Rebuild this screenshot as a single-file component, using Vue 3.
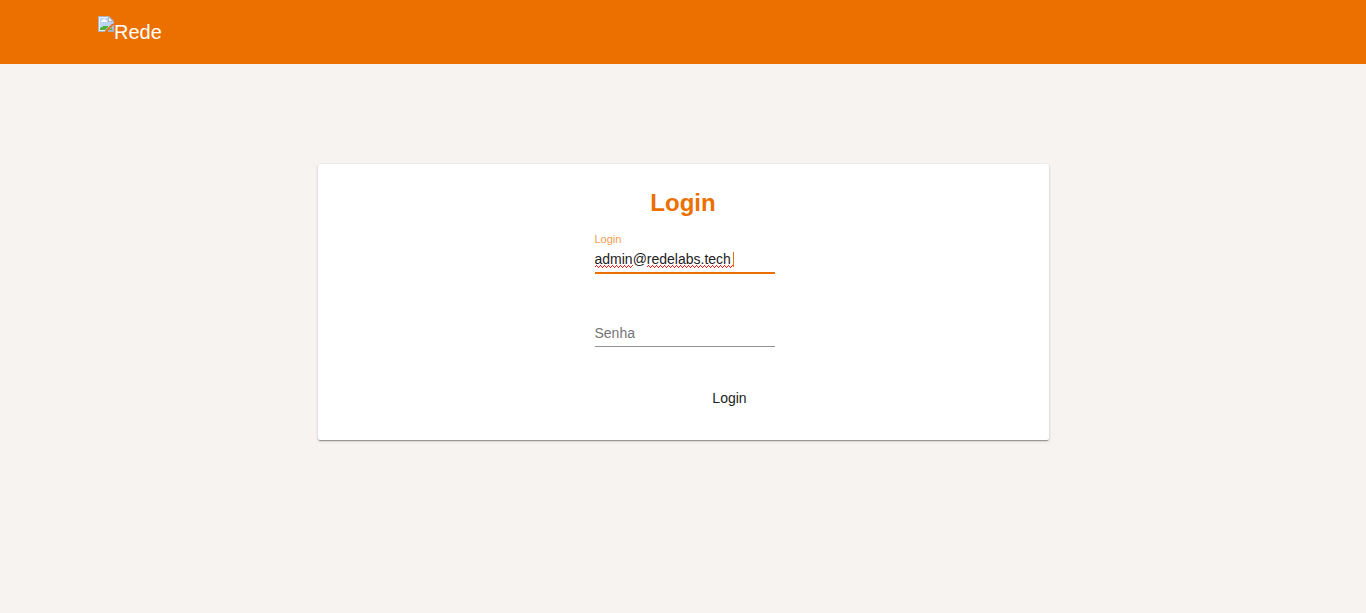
<script setup>
import { ref } from 'vue'

const login = ref('admin@redelabs.tech')
const password = ref('')
</script>

<template>
  <div class="page">
    <header class="toolbar">
      <a class="brand" href="#" aria-label="Rede">
        <svg class="broken" width="16" height="16" viewBox="0 0 16 16" aria-hidden="true">
          <path d="M0 0H11L16 5V8H14L7 15V16H0Z" fill="#a9b4c0" />
          <path d="M1 1H10.500L15 5.500V7H14L7 14V15H1Z" fill="#e8f0fb" />
          <path d="M2 2H10V6H14V7L7 14H2Z" fill="#bcd4f6" />
          <path d="M3 6V5H4V4H5V3H7V4H8V5H9V6Z" fill="#fff" />
          <path d="M2 14V12H3V11H5V10H10V11L7 14Z" fill="#4fb036" />
          <path d="M10 0L16 6H10Z" fill="#a9b4c0" />
          <path d="M11 2L14 5H11Z" fill="#fff" />
          <path d="M16 9V16H10V15L15 9Z" fill="#a9b4c0" />
          <path d="M14 11H15V12H14Z" fill="#bcd4f6" />
          <path d="M14 12V14H11.500Z" fill="#4fb036" />
        </svg>
        <span>Rede</span>
      </a>
    </header>
    <main>
      <form class="card" @submit.prevent>
        <h1>Login</h1>
        <div class="fields">
          <div class="field active">
            <label for="login">Login</label>
            <div class="control">
              <input id="login" v-model="login" type="text" autocomplete="off" spellcheck="false" />
              <svg class="spelling" width="140" height="3" aria-hidden="true">
                <defs>
                  <pattern id="wave" width="4" height="3" patternUnits="userSpaceOnUse">
                    <path d="M0 1H1V2H0ZM1 0H2V1H1ZM2 1H3V2H2ZM3 2H4V3H3Z" fill="#ff1a1a" />
                  </pattern>
                </defs>
                <rect width="38" height="3" fill="url(#wave)" />
                <rect x="52" width="86" height="3" fill="url(#wave)" />
              </svg>
              <span class="caret"></span>
            </div>
          </div>
          <div class="field">
            <div class="control">
              <label v-show="!password" class="floating" for="password">Senha</label>
              <input id="password" v-model="password" type="password" />
            </div>
          </div>
          <button type="submit">Login</button>
        </div>
      </form>
    </main>
  </div>
</template>

<style>
body {
  background: #f7f3f0;
}
</style>

<style scoped>
.page {
  min-height: 100vh;
  background: #f7f3f0;
  color: #212121;
  font-family: "Liberation Sans", Arial, sans-serif;
  font-size: 14px;
}
.toolbar {
  height: 64px;
  box-sizing: border-box;
  padding: 16px 98px;
  background: #ec7000;
}
.brand {
  display: inline-flex;
  align-items: flex-start;
  color: #fff;
  font-size: 20px;
  line-height: 32px;
  text-decoration: none;
}
.broken {
  display: block;
}
main {
  padding: 100px 16px;
}
.card {
  box-sizing: border-box;
  max-width: 731px;
  margin: 0 auto;
  padding: 24px 16px;
  border-radius: 2px;
  background: #fff;
  box-shadow: 0 1px 3px rgba(0, 0, 0, 0.2), 0 1px 1px rgba(0, 0, 0, 0.14), 0 2px 1px -1px rgba(0, 0, 0, 0.2);
}
h1 {
  margin: 0 0 15px;
  color: #ec7000;
  font-size: 24px;
  line-height: 30px;
  text-align: center;
}
.fields {
  width: 180px;
  margin: 0 auto;
  padding-left: 3px;
}
.field {
  display: flex;
  flex-direction: column;
  margin-bottom: 44px;
}
.field + .field {
  margin-bottom: 33px;
}
.field.active label {
  margin-bottom: 1px;
  color: #f29b4c;
  font-size: 11px;
  line-height: 12px;
}
.control {
  position: relative;
}
.floating {
  position: absolute;
  left: 0;
  top: 5px;
  color: #757575;
  line-height: 20px;
}
.field input {
  display: block;
  box-sizing: border-box;
  width: 100%;
  height: 29px;
  padding: 4px 0;
  border: 0;
  border-bottom: 1px solid #949494;
  border-radius: 0;
  outline: 0;
  background: transparent;
  color: #212121;
  font: inherit;
  line-height: 20px;
}
.field.active input {
  height: 28px;
  border-bottom: 2px solid #ec7000;
}
.spelling {
  position: absolute;
  left: 0;
  top: 19px;
}
.caret {
  position: absolute;
  left: 138px;
  top: 6px;
  width: 1px;
  height: 15px;
  background: #ec7000;
}
button {
  display: block;
  width: 90px;
  height: 36px;
  margin-left: auto;
  padding: 0;
  border: 0;
  background: transparent;
  color: #212121;
  font: inherit;
  line-height: 36px;
}
</style>
